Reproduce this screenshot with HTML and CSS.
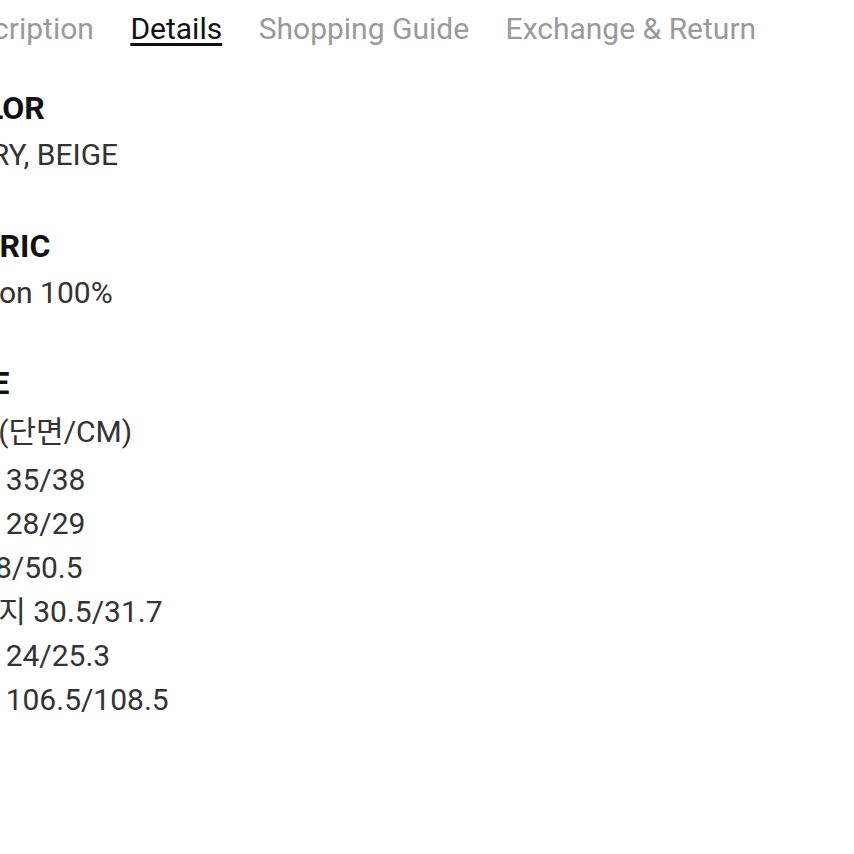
FILE: index.html
```html
<!DOCTYPE html>
<html lang="ko">
<head>
<meta charset="utf-8">
<link rel="stylesheet" href="styles.css">
</head>
<body>
<div class="page">
  <nav class="tabs">
    <span class="tab">Description</span>
    <span class="tab active">Details</span>
    <span class="tab">Shopping Guide</span>
    <span class="tab">Exchange &amp; Return</span>
  </nav>
  <section class="group first">
    <h2 class="head">COLOR</h2>
    <p class="line">IVORY, BEIGE</p>
  </section>
  <section class="group">
    <h2 class="head">FABRIC</h2>
    <p class="line">Cotton 100%</p>
  </section>
  <section class="group">
    <h2 class="head">SIZE</h2>
    <p class="line sub">실측(단면/CM)</p>
    <p class="line">허리 35/38</p>
    <p class="line">밑위 28/29</p>
    <p class="line">힙 48/50.5</p>
    <p class="line">허벅지 30.5/31.7</p>
    <p class="line">밑단 24/25.3</p>
    <p class="line">총장 106.5/108.5</p>
  </section>
</div>
</body>
</html>
```
FILE: styles.css
```css
html, body {
  margin: 0;
  padding: 0;
  background: #ffffff;
  overflow: hidden;
}
body {
  width: 854px;
  height: 854px;
  font-family: Roboto, "Noto Sans CJK KR", sans-serif;
  font-size: 30px;
}
.page {
  margin-left: -57px;
  white-space: nowrap;
}
.tabs {
  display: flex;
  gap: 36.5px;
  margin-left: -1px;
  padding-top: 9px;
  line-height: 40px;
}
.tab {
  color: #9a9a9a;
}
.tab.active {
  color: #111111;
  text-decoration: underline;
  text-decoration-thickness: 2.5px;
  text-underline-offset: 4px;
}
.group {
  margin-top: 46.5px;
}
.group.first {
  margin-top: 37px;
}
.head {
  margin: 0 0 3px 0;
  font-size: 32px;
  font-weight: 700;
  line-height: 44px;
  color: #111111;
}
.line {
  margin: 0;
  line-height: 44px;
  color: #333333;
}
.line.sub {
  padding-top: 2px;
  margin-bottom: 4px;
}
```
